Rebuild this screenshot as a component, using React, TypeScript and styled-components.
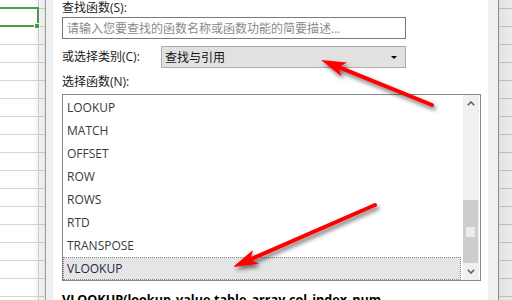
import React from 'react';
import styled, { createGlobalStyle } from 'styled-components';

const GlobalStyle = createGlobalStyle`
  html, body {
    margin: 0;
    padding: 0;
    background: #fff;
  }
  body {
    width: 512px;
    height: 300px;
    overflow: hidden;
    font-family: "Open Sans", "Noto Sans CJK SC", sans-serif;
  }
`;

const functions = ['LOOKUP', 'MATCH', 'OFFSET', 'ROW', 'ROWS', 'RTD', 'TRANSPOSE', 'VLOOKUP'];
const selected = 'VLOOKUP';
const rowCount = 18;

// page
const Screen = styled.div`
  position: relative;
  display: flex;
  width: 512px;
  height: 300px;
  overflow: hidden;
`;

// spreadsheet behind the dialog
const Sheet = styled.div<{ $width: number; $outside?: boolean }>`
  position: relative;
  flex: 0 0 ${p => p.$width}px;
  overflow: hidden;
  background: ${p => (p.$outside ? 'linear-gradient(to right, #e2e2e2, #ececec)' : '#fff')};

  &::after {
    content: '';
    position: absolute;
    top: 0;
    bottom: 0;
    right: 0;
    width: ${p => (p.$outside ? 0 : 13)}px;
    background: linear-gradient(to right, rgba(0, 0, 0, 0), rgba(0, 0, 0, 0.09));
  }
`;

const SheetRows = styled.div`
  display: flex;
  flex-direction: column;
  margin-top: -9px;
`;

const SheetRow = styled.div<{ $outside?: boolean }>`
  display: flex;
  flex-shrink: 0;
  height: 18px;
  box-sizing: border-box;
  border-bottom: 1px solid ${p => (p.$outside ? '#bdbdbd' : '#d6d6d6')};
`;

const Cell = styled.div`
  flex: 0 0 39px;
  box-sizing: border-box;
  border-right: 1px solid #d2d2d2;
`;

const Selection = styled.div`
  position: absolute;
  left: -3px;
  top: 7px;
  width: 42px;
  height: 20px;
  box-sizing: border-box;
  border: 2px solid #4a9f4d;
`;

const FillHandle = styled.div`
  position: absolute;
  left: 34px;
  top: 23px;
  width: 6px;
  height: 6px;
  box-sizing: border-box;
  background: #4a9f4d;
  border: 1px solid #fff;
`;

// dialog
const Dialog = styled.div`
  flex: 0 0 454px;
  box-sizing: border-box;
  display: flex;
  background: #f0f0f0;
  border-left: 1px solid #9b9b9b;
  border-right: 1px solid #8c8c8c;
  padding: 0 10px 0 7px;
`;

const Body = styled.div`
  flex: 1;
  background: #fff;
  padding-left: 9px;
  display: flex;
  flex-direction: column;

  & > * {
    flex-shrink: 0;
  }
`;

const Label = styled.div<{ $gap?: number }>`
  height: 16px;
  line-height: 16px;
  font-size: 12px;
  color: #1a1a1a;
  margin-top: ${p => p.$gap || 0}px;
  white-space: nowrap;
`;

const SearchBox = styled.div`
  margin-top: 1px;
  width: 344px;
  height: 22px;
  box-sizing: border-box;
  border: 1px solid #7a7a7a;
  padding-left: 4px;
  display: flex;
  align-items: center;
  font-size: 12px;
  color: #8a8a8a;
  white-space: nowrap;
`;

const CategoryRow = styled.div`
  margin-top: 7px;
  display: flex;
  align-items: center;
  height: 22px;
`;

const CategoryLabel = styled(Label)`
  flex: 0 0 99px;
`;

const Select = styled.div`
  width: 245px;
  height: 22px;
  box-sizing: border-box;
  display: flex;
  align-items: center;
  justify-content: space-between;
  padding: 0 8px 0 3px;
  background: #e1e1e1;
  border: 1px solid #adadad;
  font-size: 12px;
  color: #111;
`;

const Caret = styled.span`
  width: 0;
  height: 0;
  border-left: 3px solid transparent;
  border-right: 3px solid transparent;
  border-top: 3px solid #000;
`;

const ListBox = styled.div`
  margin-top: 4px;
  width: 419px;
  height: 187px;
  box-sizing: border-box;
  border: 1px solid #828790;
  display: flex;
`;

const Items = styled.div`
  flex: 1;
  padding: 1px 2px 0 0;
  display: flex;
  flex-direction: column;
`;

const Item = styled.div<{ $active?: boolean }>`
  flex-shrink: 0;
  height: 23px;
  box-sizing: border-box;
  line-height: 23px;
  padding-left: 4px;
  font-size: 12px;
  color: ${p => (p.$active ? '#1c2a44' : '#3a3a3a')};
  background: ${p => (p.$active ? '#e5e5e5' : 'transparent')};
  outline: ${p => (p.$active ? '1px dotted #8a8a8a' : 'none')};
  outline-offset: -1px;
`;

const ScrollBar = styled.div`
  flex: 0 0 16px;
  margin-right: 1px;
  display: flex;
  flex-direction: column;
  background: #f0f0f0;
`;

const ScrollButton = styled.div`
  height: 17px;
  flex-shrink: 0;
  display: flex;
  align-items: center;
  justify-content: center;
`;

const Track = styled.div`
  flex: 1;
  display: flex;
  flex-direction: column;
  justify-content: flex-end;
`;

const Thumb = styled.div`
  height: 63px;
  margin: 0 1px 0 0;
  background: #cdcdcd;
  display: flex;
  align-items: center;
  justify-content: center;
`;

const Grip = styled.div`
  width: 9px;
  height: 10px;
  background: #ececec;
`;

const Syntax = styled.div`
  margin-top: 11px;
  width: 340px;
  font-size: 12.6px;
  line-height: 16px;
  font-weight: 700;
  color: #000;
`;

const Overlay = styled.svg`
  position: absolute;
  left: 0;
  top: 0;
  pointer-events: none;
`;

const Chevron = ({ up }: { up?: boolean }) => (
  <svg width="8" height="5" viewBox="0 0 8 5">
    <polyline
      points={up ? '0.8,4.2 4,1 7.2,4.2' : '0.8,0.8 4,4 7.2,0.8'}
      fill="none"
      stroke="#606060"
      strokeWidth="1.6"
    />
  </svg>
);

type Pt = [number, number];

const Arrow = ({ from, to }: { from: Pt; to: Pt }) => {
  const dx = from[0] - to[0];
  const dy = from[1] - to[1];
  const len = Math.hypot(dx, dy);
  const ux = dx / len;
  const uy = dy / len;
  const nx = -uy;
  const ny = ux;
  const headLen = 25;
  const headW = 7.5;
  const notch = 19;
  const b = [to[0] + ux * headLen, to[1] + uy * headLen];
  const m = [to[0] + ux * notch, to[1] + uy * notch];
  const head = [
    [to[0], to[1]],
    [b[0] + nx * headW, b[1] + ny * headW],
    [m[0], m[1]],
    [b[0] - nx * headW, b[1] - ny * headW],
  ]
    .map(p => p.join(','))
    .join(' ');
  return (
    <g filter="url(#shadow)">
      <line x1={from[0]} y1={from[1]} x2={m[0]} y2={m[1]} stroke="#ff0000" strokeWidth="4" strokeLinecap="round" />
      <polygon points={head} fill="#ff0000" />
    </g>
  );
};

const App = () => {
  const rows = Array.from({ length: rowCount }, (_, i) => i);
  return (
    <>
      <GlobalStyle />
      <Screen>
        <Sheet $width={45}>
          <SheetRows>
            {rows.map(i => (
              <SheetRow key={i}>
                <Cell />
              </SheetRow>
            ))}
          </SheetRows>
          <Selection />
          <FillHandle />
        </Sheet>

        <Dialog>
          <Body>
            <Label>查找函数(S):</Label>
            <SearchBox>请输入您要查找的函数名称或函数功能的简要描述...</SearchBox>
            <CategoryRow>
              <CategoryLabel>或选择类别(C):</CategoryLabel>
              <Select>
                查找与引用
                <Caret />
              </Select>
            </CategoryRow>
            <Label $gap={6}>选择函数(N):</Label>
            <ListBox>
              <Items>
                {functions.map(f => (
                  <Item key={f} $active={f === selected}>
                    {f}
                  </Item>
                ))}
              </Items>
              <ScrollBar>
                <ScrollButton>
                  <Chevron up />
                </ScrollButton>
                <Track>
                  <Thumb>
                    <Grip />
                  </Thumb>
                </Track>
                <ScrollButton>
                  <Chevron />
                </ScrollButton>
              </ScrollBar>
            </ListBox>
            <Syntax>
              VLOOKUP(lookup_value,table_array,col_index_num,<wbr />range_lookup)
            </Syntax>
          </Body>
        </Dialog>

        <Sheet $width={13} $outside>
          <SheetRows>
            {rows.map(i => (
              <SheetRow key={i} $outside />
            ))}
          </SheetRows>
        </Sheet>

        <Overlay width="512" height="300" viewBox="0 0 512 300">
          <defs>
            <filter id="shadow" x="-20%" y="-20%" width="140%" height="160%">
              <feDropShadow dx="2" dy="3" stdDeviation="2" floodColor="#000" floodOpacity="0.55" />
            </filter>
          </defs>
          <Arrow from={[432, 105]} to={[321, 60]} />
          <Arrow from={[375, 205]} to={[233, 267]} />
        </Overlay>
      </Screen>
    </>
  );
};

export default App;
